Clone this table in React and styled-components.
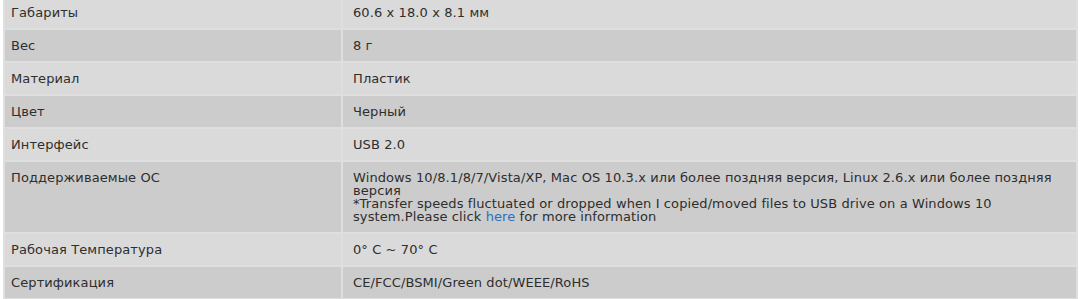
import styled, { createGlobalStyle } from 'styled-components'

const GlobalStyle = createGlobalStyle`
  html, body {
    margin: 0;
    padding: 0;
    background: #ffffff;
  }
`

const specs = [
  ['Габариты', '60.6 x 18.0 x 8.1 мм'],
  ['Вес', '8 г'],
  ['Материал', 'Пластик'],
  ['Цвет', 'Черный'],
  ['Интерфейс', 'USB 2.0'],
  ['Поддерживаемые ОС', 'os'],
  ['Рабочая Температура', '0° C ~ 70° C'],
  ['Сертификация', 'CE/FCC/BSMI/Green dot/WEEE/RoHS'],
]

const App = () => {
  return <Wrapper>
    <GlobalStyle />
    <SpecTable>
      <tbody>
        {specs.map(([name, value], i) => (
          <Row key={name} $odd={i % 2 === 1}>
            <NameCell>{name}</NameCell>
            <ValueCell>
              {value === 'os' ? <>
                Windows 10/8.1/8/7/Vista/XP, Mac OS 10.3.x или более поздняя версия, Linux 2.6.x или более поздняя версия
                <br />
                *Transfer speeds fluctuated or dropped when I copied/moved files to USB drive on a Windows 10 system.Please click <Link href="#">here</Link> for more information
              </> : value}
            </ValueCell>
          </Row>
        ))}
      </tbody>
    </SpecTable>
  </Wrapper>
}

export default App

const Wrapper = styled.div`
  padding: 0 2px 0 3px;
  margin-top: -5px;
  font-family: Verdana, "DejaVu Sans", sans-serif;
  font-size: 13px;
  letter-spacing: 0.1px;
  color: #2e2e2e;
`

const SpecTable = styled.table`
  width: 100%;
  border-collapse: separate;
  border-spacing: 2px;
  background: #dfdfdf;
`

const Row = styled.tr`
  background: ${p => p.$odd ? '#cccccc' : '#dadada'};
`

const NameCell = styled.td`
  width: 324px;
  padding: 9px 6px;
  line-height: 13px;
  vertical-align: top;
`

const ValueCell = styled.td`
  padding: 9px 20px 9px 10px;
  line-height: 13px;
  vertical-align: top;
`

const Link = styled.a`
  color: #2a6fc4;
  text-decoration: none;
`
